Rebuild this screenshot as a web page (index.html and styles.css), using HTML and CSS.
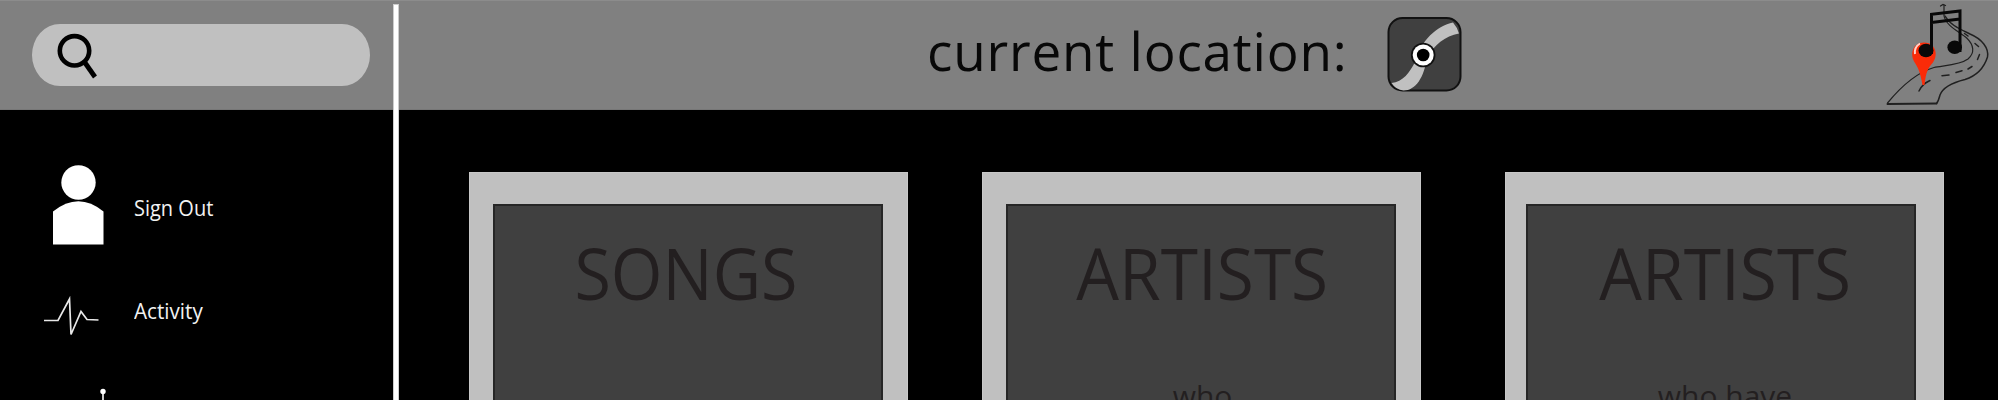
FILE: index.html
```html
<!DOCTYPE html>
<html lang="en">
<head>
<meta charset="utf-8">
<title>Current location</title>
<link rel="stylesheet" href="styles.css">
</head>
<body>
<div class="app">
  <header class="topbar">
    <div class="search">
      <svg class="search-icon" width="42" height="48" viewBox="0 0 42 48" fill="none" stroke="#000">
        <circle cx="17.500" cy="17.800" r="14.700" stroke-width="4.600"/>
        <path d="M27.500 29 38 44" stroke-width="4.800"/>
      </svg>
    </div>
    <h1 class="location"><span class="fit">current location:</span></h1>
    <svg class="disc" width="78" height="78" viewBox="0 0 78 78">
      <rect x="2.500" y="2" width="72" height="72.500" rx="14" fill="#404040" stroke="#111" stroke-width="2"/>
      <path d="M67 6.500Q71 11 73 17.500C59 20 48 29 41 42C38 61 30 74.500 17.500 74.500Q10 74 5.500 67C17 66 24 56 29 46C35 24 51 10 67 6.500Z" fill="#c0c0c0"/>
      <circle cx="37.200" cy="39" r="12.300" fill="#111"/>
      <circle cx="37.200" cy="39" r="10.500" fill="#fff"/>
      <circle cx="37.200" cy="39" r="6.300" fill="#000"/>
    </svg>
    <svg class="logo" width="110" height="110" viewBox="0 0 110 110" fill="none">
      <g stroke="#202020" stroke-width="1.500" stroke-linecap="round">
        <path d="M7.500 103C19 89 35 73 54 67.500C64 65.500 80 65 88 59C95 53 94 45 86.700 38C80 32 66 26 64 16V5" stroke-width="1.200"/>
        <path d="M65 16C70 25 80 29 90 34C102 39 109 48 107.500 57C104 68 96 76 85 79.500C75 82 63 87 60 95Q58.500 101 56.500 103.500"/>
        <path d="M7.500 104 56.500 103.500" stroke-width="2"/>
        <path d="M39 91Q42 84 50 80.500"/>
        <path d="M62 75.700 69 75M76 72.500 82 70.700M88 69 92 66.500M97.500 59.500 99.500 54.500M98.500 46.500 95 43.500M88 36 84.500 33.500"/>
        <path d="M60.500 6 63 4.500 65.500 5.500" stroke-width="1.300"/>
      </g>
      <path d="M42.500 85C40 71 37.500 67 35 63C29 54 33 42.500 44 42.500S59 54 53 62.500C48 68 46 72 44.500 85Z" fill="#fa2b08"/>
      <path d="M35 54Q34 47 40 43.500" stroke="#ffd5cc" stroke-width="2"/>
      <path d="M51.500 54V14.300L80 11V52M51.500 22.500 80 19" stroke="#080808" stroke-width="3"/>
      <ellipse cx="46" cy="50.500" rx="7.500" ry="6.700" fill="#080808"/>
      <ellipse cx="74.700" cy="47.200" rx="7.300" ry="6.700" fill="#080808"/>
    </svg>
  </header>
  <div class="body">
    <nav class="menu">
      <a class="item account">
        <svg width="64" height="90" viewBox="0 0 64 90" fill="#fff">
          <circle cx="36.500" cy="22.500" r="17.200"/>
          <path d="M11 51.500Q36.500 31 61.500 51.500V84.500H11Z"/>
        </svg>
        <span class="fit sign">Sign Out</span>
      </a>
      <a class="item activity">
        <svg width="64" height="50" viewBox="0 0 64 50" fill="none" stroke="#e8e8e8" stroke-width="1.700">
          <path d="M2 30.500H16L27.500 9 29 44.500 39 21.500 45 29.500 56.500 30"/>
        </svg>
        <span class="fit act">Activity</span>
      </a>
      <a class="item next">
        <svg width="64" height="40" viewBox="0 0 64 40" fill="#fff">
          <circle cx="61" cy="4.500" r="2.700"/>
          <path d="M60.200 4H61.800V40H60.200Z"/>
        </svg>
      </a>
    </nav>
    <main class="cards">
      <section class="card songs"><div class="panel"><h2 class="fit">SONGS</h2></div></section>
      <section class="card artists"><div class="panel"><h2 class="fit">ARTISTS</h2><p class="fit">who</p></div></section>
      <section class="card artists have"><div class="panel"><h2 class="fit">ARTISTS</h2><p class="fit">who have</p></div></section>
    </main>
  </div>
  <div class="divider"></div>
</div>
</body>
</html>
```
FILE: styles.css
```css
* { box-sizing: border-box; }
body { margin: 0; background: #000; font-family: "Open Sans", "Noto Sans", sans-serif; overflow: hidden; }
.app { position: relative; width: 1998px; height: 400px; overflow: hidden; background: #000; }
.topbar { display: flex; align-items: flex-start; height: 110px; background: #808080; border-top: 1px solid #8c8c8c; border-bottom: 1px solid #777; }
.search { flex: none; width: 338px; height: 62px; margin: 23px 0 0 32px; padding: 9px 0 0 25px; border-radius: 28px / 31px; background: #c0c0c0; }
.search-icon { display: block; }
.fit { display: block; white-space: nowrap; transform-origin: 0 50%; }
.location { flex: none; width: 459px; margin: 14px 0 0 557px; font-size: 53px; font-weight: 400; line-height: 72px; letter-spacing: .8px; color: #080808; }
.disc { flex: none; margin: 15px 0 0 0; }
.logo { flex: none; margin: -1px 0 0 416px; }
.body { display: flex; height: 290px; }
.menu { flex: none; width: 396px; padding: 50px 0 0 42px; color: #f2f2f2; font-size: 21.5px; line-height: 30px; }
.item { display: flex; align-items: flex-start; gap: 28px; }
.account { height: 130px; }
.sign { margin-top: 33px; transform: scaleX(.93); }
.activity { height: 97px; }
.act { margin-top: 6px; transform: scaleX(.96); }
.cards { display: flex; align-items: flex-start; padding: 62px 0 0 73px; }
.card { flex: none; width: 439px; height: 240px; padding: 31px 24px 0 23px; background: #c0c0c0; border: 1px solid #c8c8c8; border-bottom: 0; }
.card + .card { margin-left: 74px; }
.card.have { margin-left: 84px; padding: 31px 27px 0 20px; }
.panel { display: flex; flex-direction: column; align-items: center; height: 220px; background: #404040; border: 2px solid #262626; border-bottom: 0; color: #231f20; }
.panel .fit { transform-origin: 50% 50%; }
.panel h2 { margin: 18px 0 0; font-size: 71.5px; font-weight: 400; line-height: 98px; transform: scaleX(.945); }
.songs h2 { margin-right: 4px; transform: scaleX(.93); }
.panel p { margin: 54px 0 0; font-size: 30px; line-height: 40px; }
.artists .panel { padding-left: 3px; }
.have .panel { padding-left: 8px; }
.divider { position: absolute; left: 393px; top: 4px; width: 6px; height: 396px; background: #fff; border: 1px solid #ccc; border-width: 1px 1px 0; }
```
